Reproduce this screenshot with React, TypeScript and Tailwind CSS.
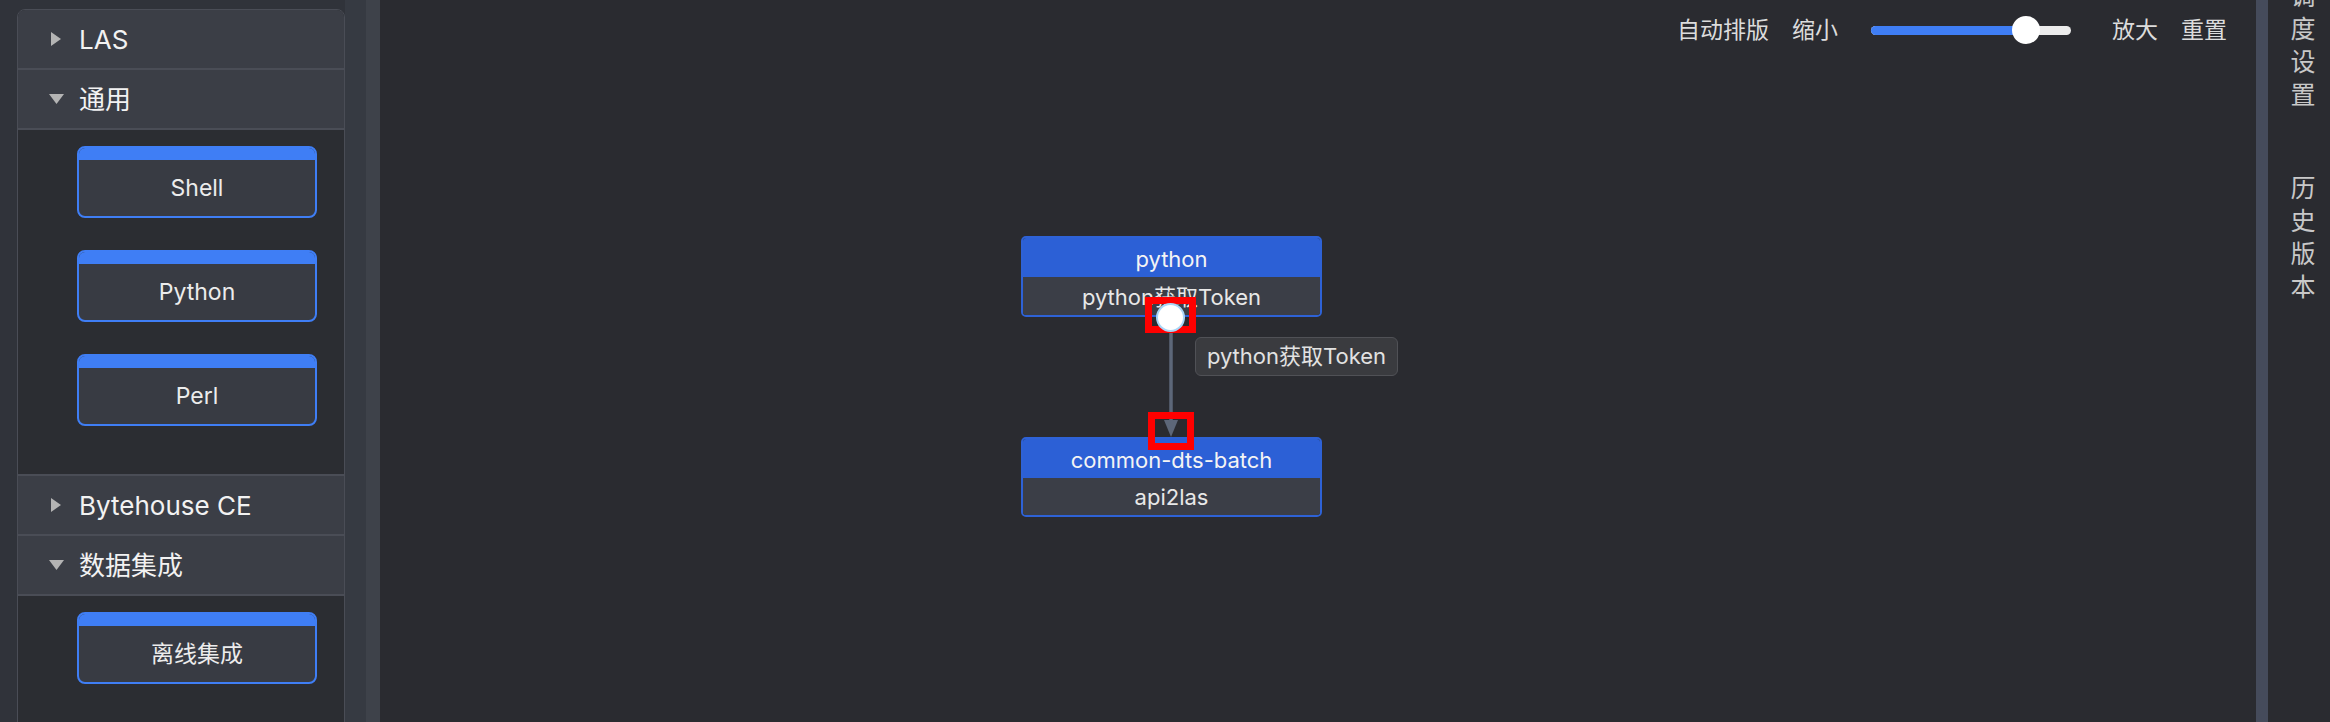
import React from "react";

const Caret = ({ open }: { open: boolean }) =>
  open ? (
    <svg width="15" height="10" viewBox="0 0 15 10" className="shrink-0">
      <path d="M0 0 L15 0 L7.5 10 Z" fill="#b4b4b4" />
    </svg>
  ) : (
    <svg width="10" height="14" viewBox="0 0 10 14" className="shrink-0">
      <path d="M0 0 L10 7 L0 14 Z" fill="#b4b4b4" />
    </svg>
  );

const GroupHeader = ({ title, open }: { title: string; open: boolean }) => (
  <div className="flex h-[60px] items-center border-b-2 border-[#4a4d56] bg-[#3b3e46] pl-[30px]">
    <div className="flex w-[16px] justify-center">
      <Caret open={open} />
    </div>
    <span className="ml-[15px] text-[26px] text-[#f2f2f2]">{title}</span>
  </div>
);

const ToolCard = ({ name }: { name: string }) => (
  <div className="mb-[32px] ml-[59px] flex h-[72px] w-[240px] flex-col overflow-hidden rounded-[8px] border-2 border-[#3f7ef5] bg-[#383b43]">
    <div className="h-[12px] bg-[#3f7ef5]" />
    <div className="flex flex-1 items-center justify-center text-[23px] text-[#ececec]">{name}</div>
  </div>
);

const GroupBody = ({ items }: { items: string[] }) => (
  <div className="border-b-2 border-[#4a4d56] bg-[#2b2d32] pt-[16px] pb-[16px]">
    {items.map((i) => (
      <ToolCard key={i} name={i} />
    ))}
  </div>
);

const FlowNode = ({ title, sub, top, h }: { title: string; sub: string; top: string; h: string }) => (
  <div className={`absolute left-[641px] flex w-[301px] flex-col overflow-hidden rounded-[5px] border-2 border-[#2e62d6] ${top} ${h}`}>
    <div className="flex h-[39px] items-center justify-center bg-[#2c60d6] pt-[3px] text-[22px] text-[#f4f4f4]">{title}</div>
    <div className="flex flex-1 items-center justify-center bg-[#3b3e47] pt-[2px] text-[22px] text-[#e8e8e8]">{sub}</div>
  </div>
);

export default function App() {
  return (
    <div className="flex h-[722px] w-[2330px] overflow-hidden bg-[#2a2b30] font-['Inter','Noto_Sans_CJK_SC',sans-serif]">
      <aside className="flex h-full w-[366px] shrink-0 bg-[#30333a]">
        <div className="ml-[17px] mt-[9px] h-[760px] w-[328px] overflow-hidden rounded-t-[8px] border border-[#4a4d56] bg-[#2b2d32]">
          <GroupHeader title="LAS" open={false} />
          <GroupHeader title="通用" open />
          <GroupBody items={["Shell", "Python", "Perl"]} />
          <GroupHeader title="Bytehouse CE" open={false} />
          <GroupHeader title="数据集成" open />
          <GroupBody items={["离线集成"]} />
        </div>
        <div className="h-full w-[21px] bg-[#363a42]" />
      </aside>
      <div className="h-full w-[14px] shrink-0 bg-[#3e424a]" />

      <main className="relative h-full flex-1">
        <div className="absolute right-[29px] top-[14px] flex h-[32px] items-center text-[23px] text-[#dcdcdc]">
          <span>自动排版</span>
          <span className="ml-[23px]">缩小</span>
          <div className="relative ml-[33px] h-[9px] w-[200px] rounded-full bg-[#ececec]">
            <div className="h-full w-[155px] rounded-full bg-[#3f7ef5]" />
            <div className="absolute left-[141px] top-[-10px] h-[28px] w-[28px] rounded-full bg-white" />
          </div>
          <span className="ml-[41px]">放大</span>
          <span className="ml-[23px]">重置</span>
        </div>

        <FlowNode title="python" sub="python获取Token" top="top-[236px]" h="h-[81px]" />
        <FlowNode title="common-dts-batch" sub="api2las" top="top-[437px]" h="h-[80px]" />

        <svg className="absolute left-[780px] top-[317px]" width="22" height="120" viewBox="0 0 22 120">
          <line x1="11" y1="0" x2="11" y2="104" stroke="#5d6779" strokeWidth="3.5" />
          <path d="M4 103 L18 103 L11 120 Z" fill="#5d6779" />
        </svg>

        <div className="absolute left-[815px] top-[337px] flex h-[39px] w-[203px] items-center justify-center rounded-[6px] border border-[#505156] bg-[#3a3b3f] text-[22px] text-[#e2e2e2]">
          python获取Token
        </div>

        <div className="absolute left-[765px] top-[297px] h-[36px] w-[51px] border-[7px] border-[#ff0000]" />
        <div className="absolute left-[768px] top-[412px] h-[38px] w-[46px] border-[7px] border-[#ff0000]" />
        <div className="absolute left-[776px] top-[303px] h-[29px] w-[29px] rounded-full border-2 border-[#a9d6f7] bg-white" />
      </main>

      <div className="h-full w-[12px] shrink-0 bg-[#454b5b]" />

      <aside className="flex h-full w-[62px] shrink-0 flex-col items-center bg-[#2a2b30] pl-[8px] text-[25px] leading-[33px] text-[#c8c8c8]">
        <div className="mt-[-20px] flex flex-col items-center">
          {"调度设置".split("").map((c, i) => (
            <span key={i}>{c}</span>
          ))}
        </div>
        <div className="mt-[60px] flex flex-col items-center">
          {"历史版本".split("").map((c, i) => (
            <span key={i}>{c}</span>
          ))}
        </div>
      </aside>
    </div>
  );
}
